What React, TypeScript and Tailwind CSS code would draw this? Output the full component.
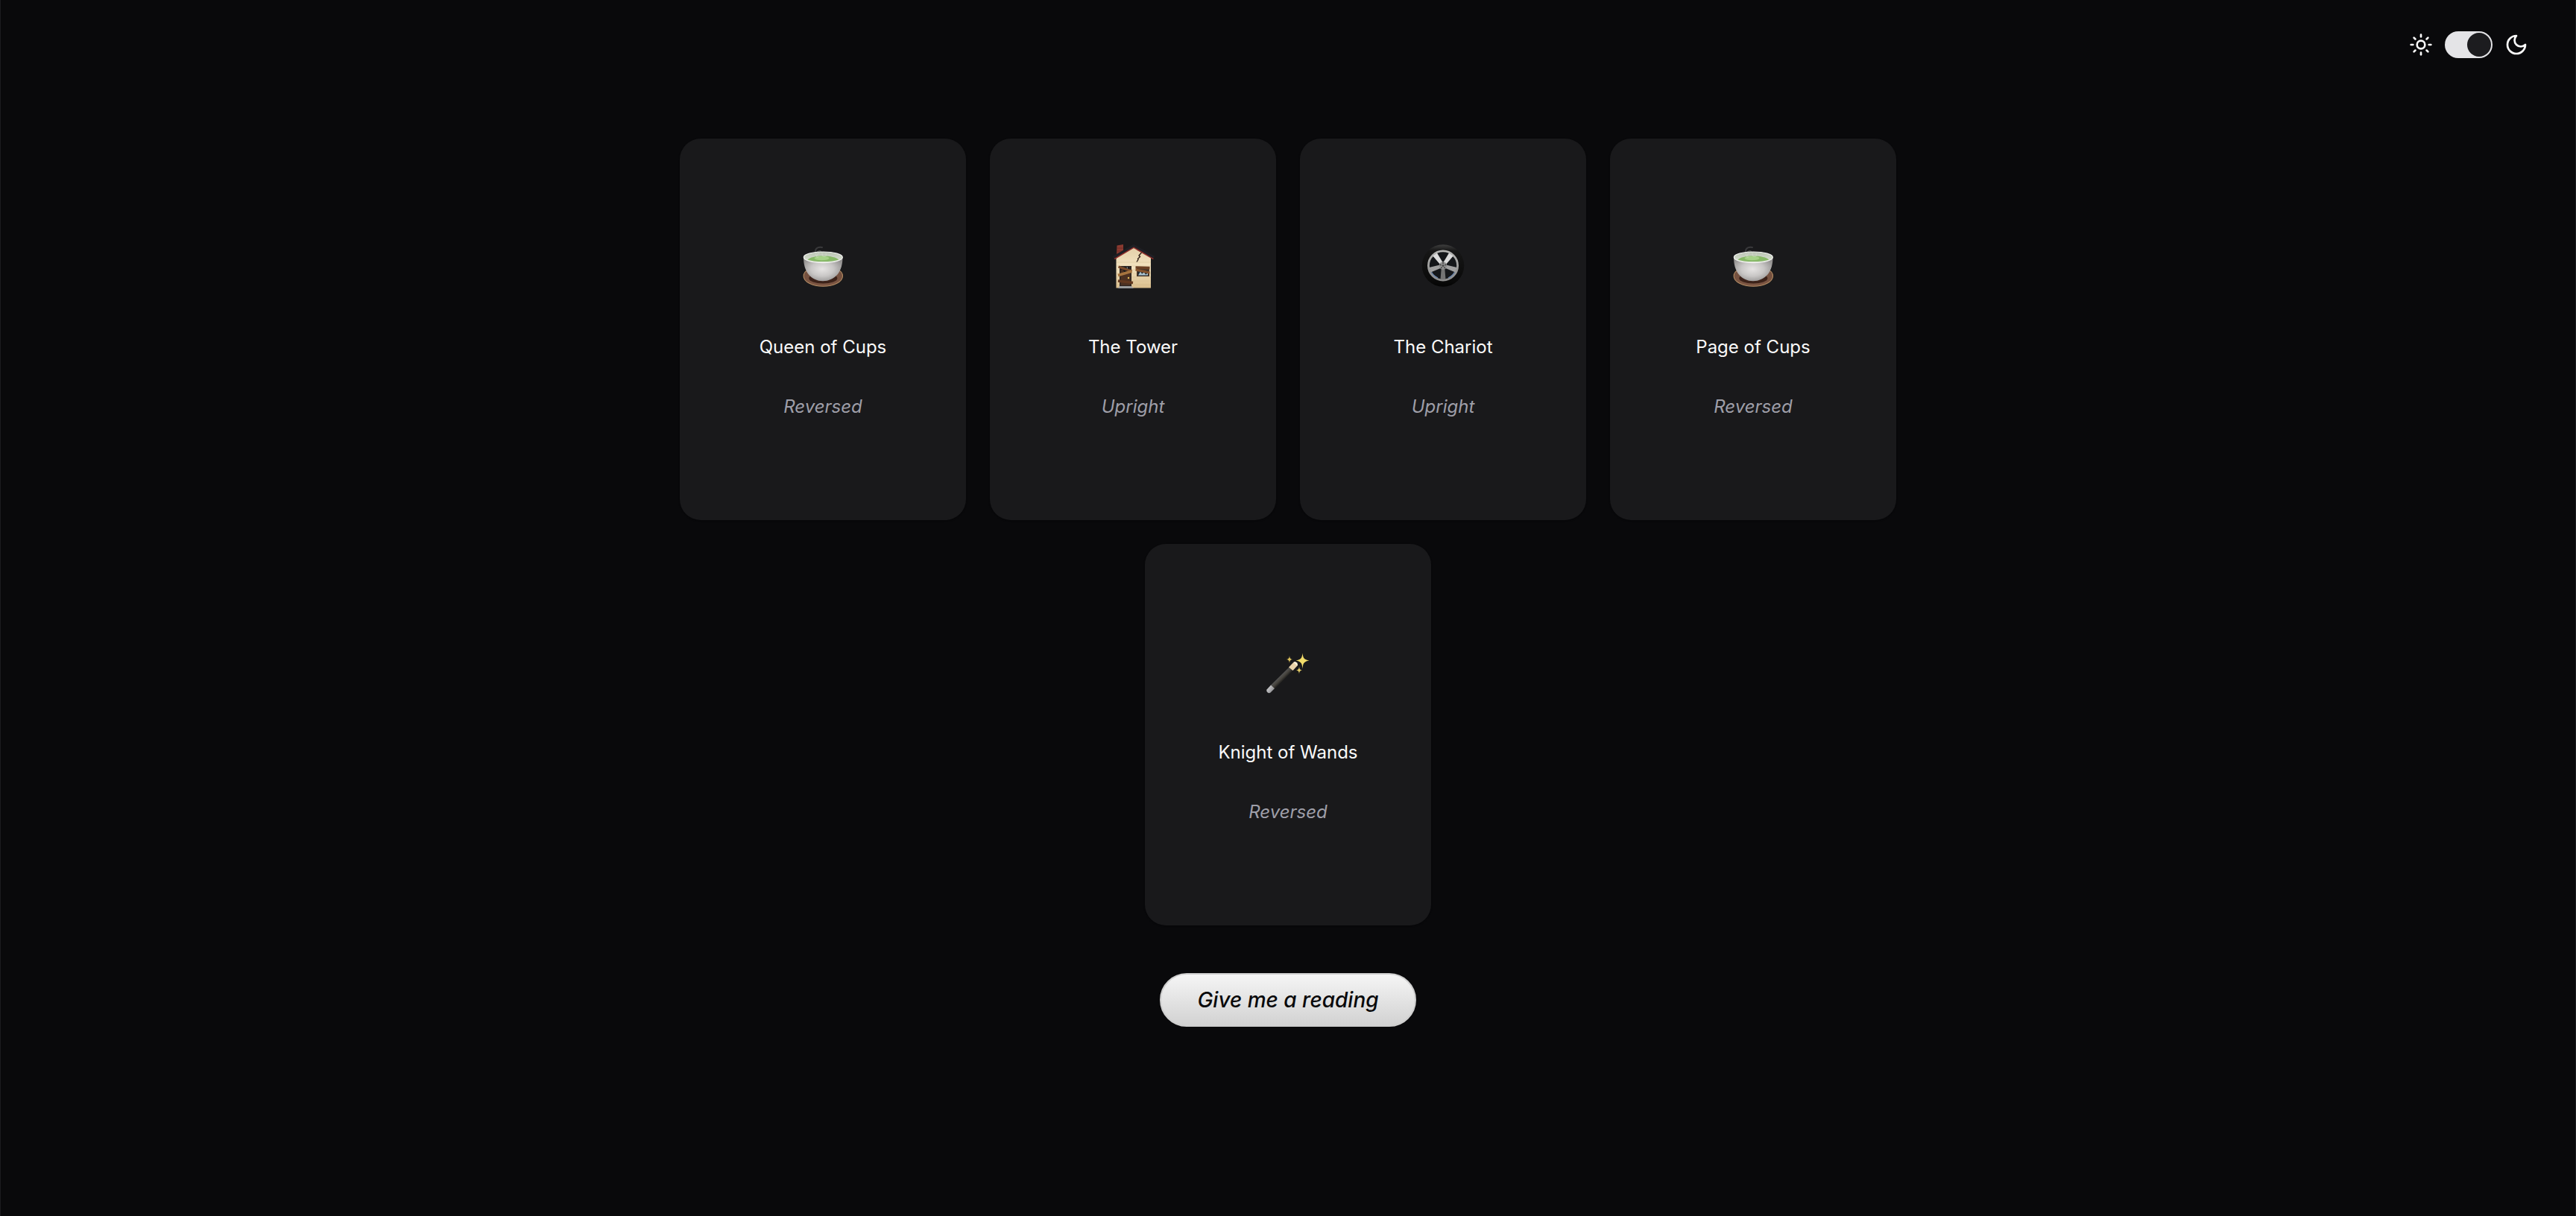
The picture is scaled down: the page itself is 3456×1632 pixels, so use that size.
import { useState } from "react";
import { Sun } from "lucide-react";

function Crescent() {
  return (
    <svg
      viewBox="0 0 24 24"
      className="size-8"
      fill="none"
      stroke="currentColor"
      strokeWidth="2"
      strokeLinecap="round"
      strokeLinejoin="round"
      aria-hidden="true"
    >
      <path d="M12 3a6 6 0 0 0 9 9 9 9 0 1 1-9-9Z" />
    </svg>
  );
}

function TeaCup() {
  return (
    <svg viewBox="12 15 64 64" className="size-16 overflow-visible" aria-hidden="true">
      <defs>
        <radialGradient id="bowl" cx="0.48" cy="0.5" r="0.58">
          <stop offset="0" stopColor="#e6e4e3" />
          <stop offset="0.5" stopColor="#c9c7c6" />
          <stop offset="1" stopColor="#908e8d" />
        </radialGradient>
        <linearGradient id="saucer" x1="0" y1="0" x2="0" y2="1">
          <stop offset="0" stopColor="#6e4c3c" />
          <stop offset="1" stopColor="#7d5643" />
        </linearGradient>
        <linearGradient id="inner" x1="0" y1="0" x2="0" y2="1">
          <stop offset="0" stopColor="#b9c2b2" />
          <stop offset="1" stopColor="#dfe6d8" />
        </linearGradient>
      </defs>
      <ellipse cx="44.3" cy="55.5" rx="26.2" ry="13.8" fill="url(#saucer)" stroke="#b08a62" strokeWidth="1.1" />
      <ellipse cx="44.3" cy="58.5" rx="19" ry="7" fill="#3c2219" />
      <path d="M18 30c0 9 2 17.500 7 23.500 4 5 11 8.800 19 8.800s15-3.800 19.500-8.800c5-6 7-14.500 7-23.500z" fill="url(#bowl)" />
      <ellipse cx="44.3" cy="30.3" rx="26" ry="7.3" fill="url(#inner)" stroke="#f1f1ef" strokeWidth="1.2" />
      <path d="M23.500 33.500c3-3 11-5 20.800-5s18 2 21 5c-4 1.600-12 2.600-21 2.600s-17-1-20.800-2.600z" fill="#86b866" />
      <ellipse cx="42.5" cy="31.5" rx="10" ry="2.8" fill="#a5d286" />
      <path
        d="M34 27c1-5 6-6 8-4 3 3-1 5 3 6 3 1 4-1 3-4M38 30c-4 2-3-4 1-5"
        fill="none"
        stroke="#dfe9d8"
        strokeOpacity="0.35"
        strokeWidth="1.3"
        strokeLinecap="round"
      />
      <path d="M34 22c0-4 4-6 9-5" fill="none" stroke="#ffffff" strokeOpacity="0.14" strokeWidth="2" strokeLinecap="round" />
    </svg>
  );
}

function House() {
  return (
    <svg viewBox="13 15 64 64" className="size-16 overflow-visible" aria-hidden="true">
      <defs>
        <linearGradient id="wall" x1="0" y1="0" x2="0" y2="1">
          <stop offset="0" stopColor="#e3cfa8" />
          <stop offset="0.5" stopColor="#f3e3c0" />
          <stop offset="1" stopColor="#d9bd8c" />
        </linearGradient>
      </defs>
      <path d="M23.500 14.500l8.500-1.500v12l-9 4z" fill="#8a3a30" />
      <path d="M24 18h7.500M23.500 22h8" stroke="#6b2a24" strokeWidth="0.8" />
      <path d="M22.500 31L46 16l23 15v40.500H22.500z" fill="url(#wall)" />
      <path
        d="M23 37h46M23 42h46M23 47h46M23 52h46M23 57h46M23 62h46M23 67h46"
        stroke="#cdb488"
        strokeOpacity="0.45"
        strokeWidth="0.7"
      />
      <path d="M20 32.500L46 17l26.500 15.500" fill="none" stroke="#8f2f2b" strokeWidth="2" />
      <path d="M18.500 30.500L46 14.500l27.500 16" fill="none" stroke="#1f1f24" strokeWidth="3.2" />
      <path d="M56.500 24l-3.500 4 1.500 1.500-3 3 .500 1-2 3" fill="none" stroke="#2a1a12" strokeWidth="1.3" />
      <path d="M27 42h16v27H27z" fill="#2d2521" />
      <path d="M28.500 47h13v21h-13z" fill="#4b3021" />
      <path d="M31 44l8-1 2 5-8 2z" fill="#15191c" />
      <path d="M32 44l3 2M37 43l1 4" stroke="#9fb3bc" strokeWidth="0.8" />
      <circle cx="39" cy="58" r="1.2" fill="#e4bd5a" />
      <path d="M25.500 43l18 6" stroke="#7a4b2a" strokeWidth="3.4" />
      <path d="M25 54.500l18.500-5.500" stroke="#a6743f" strokeWidth="3.6" />
      <path d="M25 62l20 2.500" stroke="#62381f" strokeWidth="3.6" />
      <path d="M27 69h16l3 3H25z" fill="#9c9c9c" />
      <path d="M50 43h17v13H50z" fill="#4d3728" />
      <path d="M51.500 48h14v7h-14z" fill="#1e272c" />
      <path d="M52 54.500l3-5 2 3 3-2 2 3 3-2v3z" fill="#a9c0cc" />
      <path d="M48.500 44l19 .500" stroke="#6b4024" strokeWidth="3.4" />
      <path d="M48.500 47l19 4" stroke="#87532c" strokeWidth="3" />
    </svg>
  );
}

const spokes = [
  { angle: 0, fill: "#747474" },
  { angle: 72, fill: "#a0a0a0" },
  { angle: 144, fill: "#dcdcdc" },
  { angle: 216, fill: "#dcdcdc" },
  { angle: 288, fill: "#a0a0a0" },
];

function Wheel() {
  return (
    <svg viewBox="14 15 64 64" className="size-16 overflow-visible" aria-hidden="true">
      <defs>
        <linearGradient id="tire" x1="0" y1="0" x2="0" y2="1">
          <stop offset="0" stopColor="#3f3f3f" />
          <stop offset="0.15" stopColor="#161616" />
          <stop offset="0.85" stopColor="#0a0a0a" />
          <stop offset="1" stopColor="#040404" />
        </linearGradient>
        <linearGradient id="rim" x1="0" y1="0" x2="0" y2="1">
          <stop offset="0" stopColor="#b4b4b2" />
          <stop offset="1" stopColor="#8c8c8c" />
        </linearGradient>
      </defs>
      <circle cx="46" cy="41.5" r="28.3" fill="url(#tire)" />
      <circle cx="46" cy="41.5" r="19.6" fill="#15171a" stroke="url(#rim)" strokeWidth="2.8" />
      <path d="M29 46a17.500 17.500 0 0 0 10 12M53 58a17.500 17.500 0 0 0 10-12" fill="none" stroke="#6d87ad" strokeWidth="1.2" />
      {spokes.map(({ angle, fill }) => (
        <path key={angle} d="M44 42l-1.500 18h7l-1.500-18z" transform={`rotate(${angle} 46 41.5)`} fill={fill} />
      ))}
      <circle cx="46" cy="41.5" r="5.2" fill="#8f8f8f" />
      {spokes.map(({ angle }) => (
        <circle key={angle} cx="46" cy="38" r="0.9" fill="#3a3a3a" transform={`rotate(${angle} 46 41.5)`} />
      ))}
      <circle cx="46" cy="41.5" r="1.5" fill="#4c4c4c" />
    </svg>
  );
}

function Wand() {
  return (
    <svg viewBox="16 14 64 64" className="size-16 overflow-visible" aria-hidden="true">
      <defs>
        <linearGradient id="rod" gradientUnits="userSpaceOnUse" x1="37" y1="47" x2="43" y2="53">
          <stop offset="0" stopColor="#565656" />
          <stop offset="0.5" stopColor="#45423c" />
          <stop offset="1" stopColor="#141414" />
        </linearGradient>
        <linearGradient id="silver" gradientUnits="userSpaceOnUse" x1="20" y1="62" x2="28" y2="68">
          <stop offset="0" stopColor="#d2d2d4" />
          <stop offset="1" stopColor="#8f8f92" />
        </linearGradient>
      </defs>
      <path d="M49.500 35.500l5 4.500L30 65l-5.500-5z" fill="url(#rod)" />
      <path d="M25 59.500l5 4.500-5.500 5.500q-2 1.500-4-.200t-1-3.800z" fill="url(#silver)" />
      <path d="M49 35.500l6.300-6.500q2-1.500 4.200.300t1 4.200L54.500 40z" fill="#e9d3ab" />
      <path d="M55.300 29q2-1.500 4.200.300t1 4.200z" fill="#fff4dc" />
      <path
        d="M67.500 16.500c.700 6.500 1.800 8.500 9 10-7.200 1.500-8.300 3.500-9 11-.700-7.500-1.800-9.500-9-11 7.200-1.500 8.300-3.500 9-10z"
        fill="#f2dc6a"
      />
      <path d="M50 20c.400 3.500 1 4.300 4 5-3 .700-3.600 1.500-4 5-.400-3.500-1-4.300-4-5 3-.700 3.600-1.500 4-5z" fill="#dfc25c" />
      <path d="M63 34.500c.400 3.500 1 4.300 4 5-3 .700-3.600 1.500-4 5-.400-3.500-1-4.300-4-5 3-.700 3.600-1.500 4-5z" fill="#e3cb66" />
    </svg>
  );
}

const cards = [
  { name: "Queen of Cups", position: "Reversed", Icon: TeaCup },
  { name: "The Tower", position: "Upright", Icon: House },
  { name: "The Chariot", position: "Upright", Icon: Wheel },
  { name: "Page of Cups", position: "Reversed", Icon: TeaCup },
  { name: "Knight of Wands", position: "Reversed", Icon: Wand },
];

export default function App() {
  const [dark, setDark] = useState(true);

  return (
    <div className="flex min-h-screen flex-col border-x border-[#1c1c1f] bg-[#09090b] font-[Inter,sans-serif] text-[#fafafa]">
      <header className="flex items-center justify-end gap-4 px-[63px] pt-[42px]">
        <Sun className="size-8" aria-hidden="true" />
        <label className="flex h-9 w-16 cursor-pointer items-center rounded-full bg-[#e4e4e7] px-0.5 has-checked:justify-end">
          <input
            type="checkbox"
            role="switch"
            aria-label="Dark mode"
            className="sr-only"
            checked={dark}
            onChange={(event) => setDark(event.target.checked)}
          />
          <span className="size-8 rounded-full bg-[#1c1c1f]" />
        </label>
        <Crescent />
      </header>
      <main className="flex flex-col items-center gap-16 px-16 pt-27 pb-16">
        <ul className="flex max-w-[1664px] flex-wrap justify-center gap-8">
          {cards.map(({ name, position, Icon }) => (
            <li
              key={name}
              className="flex h-128 w-96 flex-col items-center justify-center gap-12 rounded-[28px] bg-[#19191b] text-2xl shadow-sm"
            >
              <div className="flex h-20 items-center">
                <Icon />
              </div>
              <h2>{name}</h2>
              <p className="text-[#9f9fa9] italic">{position}</p>
            </li>
          ))}
        </ul>
        <button
          type="button"
          className="h-[72px] rounded-full border-2 border-[#cfcfcf] bg-linear-to-b from-[#f5f5f5] to-[#d2d2d2] px-12 text-[28px] font-medium text-[#09090b] italic"
        >
          Give me a reading
        </button>
      </main>
    </div>
  );
}
